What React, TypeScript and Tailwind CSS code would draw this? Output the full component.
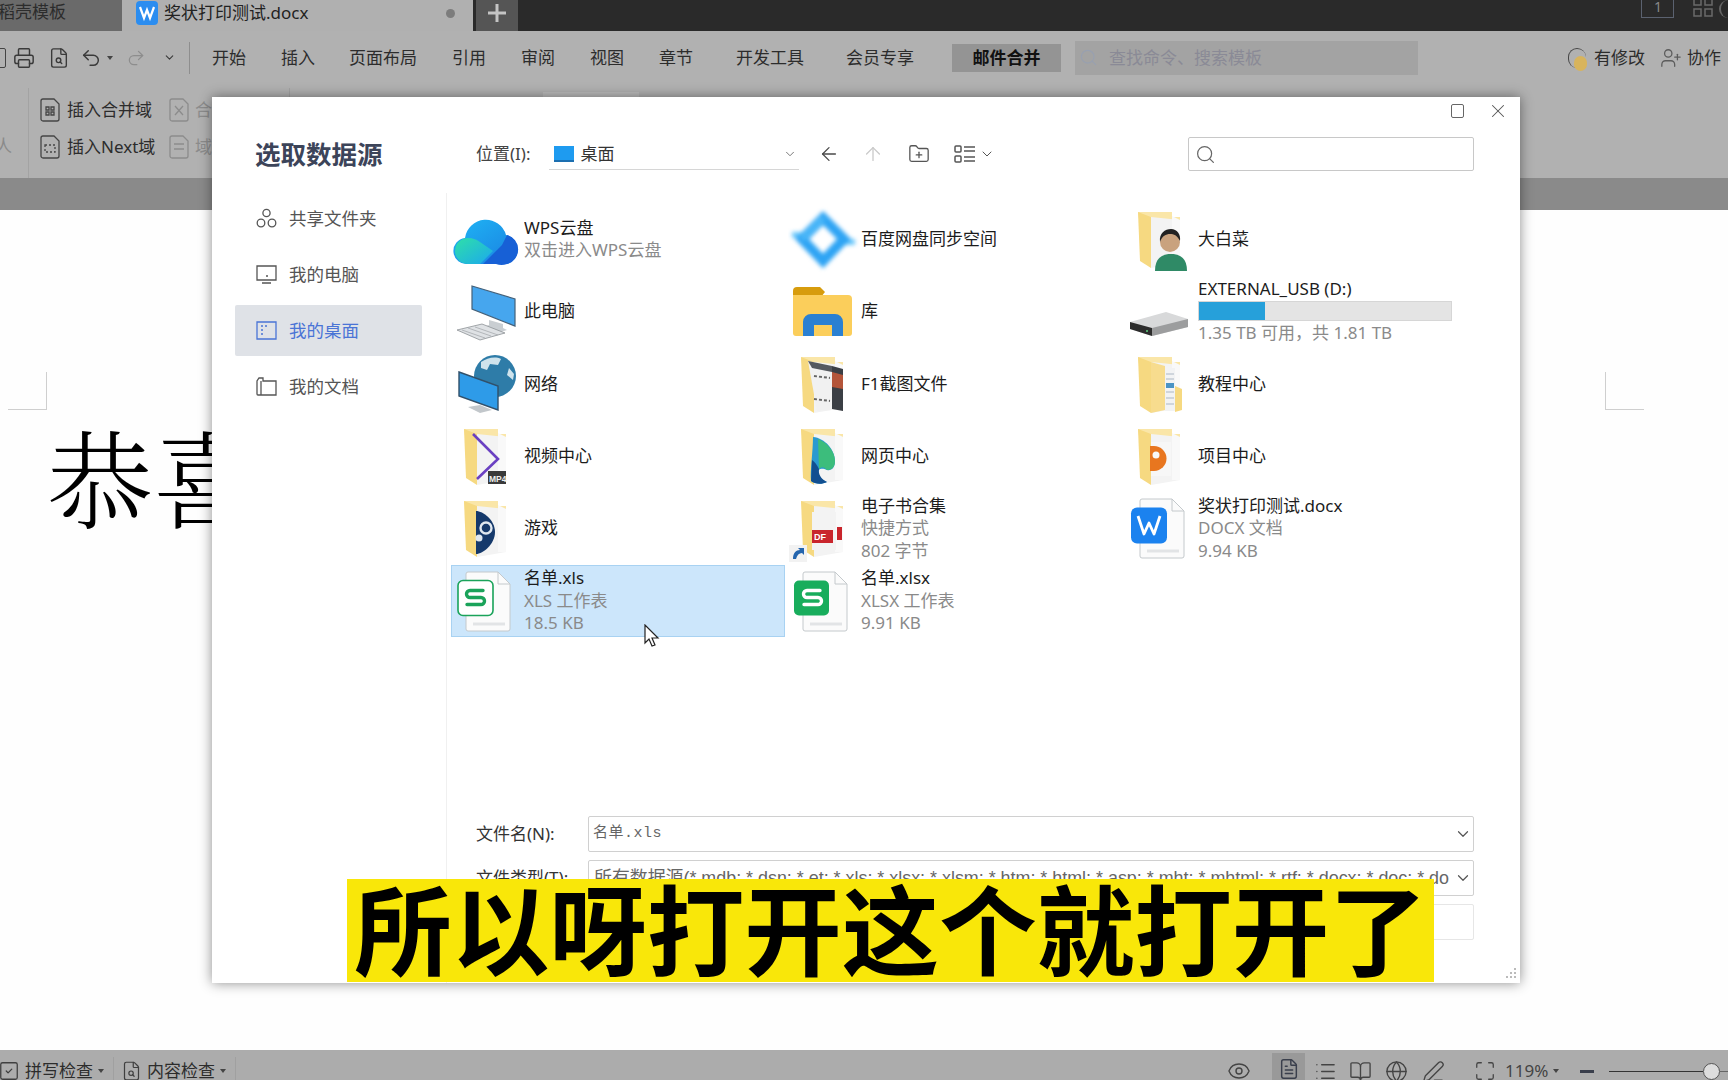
import type { ReactNode } from 'react'
import {
  ArrowLeft,
  ArrowUp,
  BookOpen,
  ChevronDown,
  Eye,
  FileSearch,
  FileText,
  FolderPlus,
  Globe,
  List,
  Maximize,
  PenLine,
  Printer,
  Redo2,
  Search,
  SquareCheck,
  Undo2,
  UserPlus,
  X,
} from 'lucide-react'

const menus = [
  { label: '开始', cls: 'ml-[22px]' },
  { label: '插入', cls: 'ml-[35px]' },
  { label: '页面布局', cls: 'ml-[34px]' },
  { label: '引用', cls: 'ml-[35px]' },
  { label: '审阅', cls: 'ml-[35px]' },
  { label: '视图', cls: 'ml-[35px]' },
  { label: '章节', cls: 'ml-[35px]' },
  { label: '开发工具', cls: 'ml-[43px]' },
  { label: '会员专享', cls: 'ml-[42px]' },
]

function Caret() {
  return <span className="ml-[5px] inline-block border-x-[3px] border-t-[4px] border-x-transparent border-t-[#444]" />
}

function TitleBar() {
  return (
    <div className="flex h-[31px] bg-[#2a2a2a] shrink-0 overflow-hidden text-[17px] leading-[24px]">
      <div className="w-[122px] bg-[#6a6a6a] text-[#2c2c2c] -indent-[2px]">稻壳模板</div>
      <div className="w-[351px] bg-[#b0b0b0] flex items-center pl-[14px] pb-[5px] text-[#222]">
        <svg width="22" height="24" viewBox="0 0 22 24">
          <rect width="22" height="24" rx="4" fill="#2b8df0" />
          <path d="M4 6l4 11 3-8 3 8 4-11" fill="none" stroke="#fff" strokeWidth="2.2" />
        </svg>
        <span className="ml-[6px]">奖状打印测试.docx</span>
        <span className="ml-[138px] w-[9px] h-[9px] rounded-full bg-[#7c7c7c]" />
      </div>
      <div className="ml-[3px] w-[42px] bg-[#555] flex justify-center pb-[6px] items-center text-[#bbb]">
        <svg width="22" height="22" viewBox="0 0 22 22"><path d="M11 2v18M2 11h18" stroke="#c4c4c4" strokeWidth="3" /></svg>
      </div>
      <div className="ml-auto flex items-start text-[#888]">
        <div className="w-[33px] h-[18px] border border-t-0 border-[#5b6270] text-[14px] leading-[14px] pl-[12px]">1</div>
        <svg className="ml-[19px]" width="20" height="18" viewBox="0 0 20 18" fill="none" stroke="#6a6a6a" strokeWidth="1.5">
          <rect x="1" y="-2" width="7" height="7" /><rect x="12" y="-2" width="7" height="7" />
          <rect x="1" y="9" width="7" height="7" /><rect x="12" y="9" width="7" height="7" />
        </svg>
        <div className="ml-[6px] w-[9px] h-[18px] rounded-l-full border-l-2 border-[#666]" />
      </div>
    </div>
  )
}

function MenuRow() {
  return (
    <div className="flex items-center h-[57px] pb-[4px] shrink-0 text-[17px] text-[#2c2c2c] bg-[#b1b1b1]">
      <div className="-ml-[8px] w-[14px] h-[20px] border-[1.5px] border-[#444] rounded-[2px]" />
      <Printer className="ml-[7px] w-[22px] h-[22px] text-[#3a3a3a]" strokeWidth={1.6} />
      <FileSearch className="ml-[13px] w-[22px] h-[24px] text-[#3a3a3a]" strokeWidth={1.5} />
      <Undo2 className="ml-[10px] w-[22px] h-[22px] text-[#3a3a3a]" strokeWidth={1.6} />
      <Caret />
      <Redo2 className="ml-[13px] w-[20px] h-[20px] text-[#8d8d8d]" strokeWidth={1.5} />
      <ChevronDown className="ml-[17px] w-[13px] h-[13px] text-[#3a3a3a]" />
      <div className="ml-[13px] w-px h-[32px] bg-[#8e8e8e]" />
      {menus.map((m) => (
        <span key={m.label} className={m.cls}>{m.label}</span>
      ))}
      <div className="ml-[38px] w-[109px] h-[28px] bg-[#949494] flex items-center justify-center font-bold text-[#111]">邮件合并</div>
      <div className="ml-[14px] w-[343px] h-[34px] bg-[#a3a3a3] flex items-center text-[#8a8a96]">
        <Search className="ml-[4px] w-[19px] h-[19px] text-[#98a0b0]" strokeWidth={1.5} />
        <span className="ml-[11px]">查找命令、搜索模板</span>
      </div>
      <div className="ml-[150px] w-[18px] h-[20px] rounded-full border-l border-t border-[#444] relative">
        <span className="absolute left-[5px] top-[7px] w-[13px] h-[15px] rounded-full bg-[#d8b45c]" />
      </div>
      <span className="ml-[8px]">有修改</span>
      <UserPlus className="ml-[15px] w-[22px] h-[22px] text-[#5c5c5c]" strokeWidth={1.4} />
      <span className="ml-[5px]">协作</span>
    </div>
  )
}

function SmallDoc({ inner, muted }: { inner: ReactNode; muted?: boolean }) {
  return (
    <svg width="20" height="24" viewBox="0 0 20 24" fill="none" stroke={muted ? '#8c8c8c' : '#454545'} strokeWidth="1.3">
      <path d="M3 1h11l5 5v15a2 2 0 0 1-2 2H3a2 2 0 0 1-2-2V3a2 2 0 0 1 2-2z" />
      {inner}
    </svg>
  )
}

function RibbonRow() {
  return (
    <div className="flex h-[90px] shrink-0 bg-[#b1b1b1] text-[17px] text-[#2c2c2c]">
      <div className="w-[29px] border-r border-[#a3a3a3] text-[#8a8a8a] pt-[45px] -indent-[5px]">人</div>
      <div className="flex flex-col gap-[11px] pl-[11px] pt-[9px] w-[130px]">
        <div className="flex items-center h-[26px]">
          <SmallDoc inner={<path d="M6 9h3v3H6zM11 9h3v3h-3zM6 14h3v3H6zM11 14h3v3h-3z" />} />
          <span className="ml-[7px]">插入合并域</span>
        </div>
        <div className="flex items-center h-[26px]">
          <SmallDoc inner={<path d="M5 10h10v7H5z" strokeDasharray="2 2" />} />
          <span className="ml-[7px]">插入Next域</span>
        </div>
      </div>
      <div className="flex flex-col gap-[11px] pl-[10px] pt-[9px] w-[130px] text-[#8c8c8c]">
        <div className="flex items-center h-[26px]">
          <SmallDoc muted inner={<path d="M6 8l8 9M14 8l-8 9" />} />
          <span className="ml-[6px]">合</span>
        </div>
        <div className="flex items-center h-[26px]">
          <SmallDoc muted inner={<path d="M5 9h10M5 14h10" />} />
          <span className="ml-[6px]">域</span>
        </div>
      </div>
      <div className="w-px h-[9px] bg-[#a3a3a3]" />
      <div className="ml-[253px] mt-[4px] w-[96px] h-[5px] bg-[#bcbcbc]" />
    </div>
  )
}

function Document() {
  return (
    <div className="flex-1 bg-[#fefefe] relative overflow-hidden">
      <div className="absolute left-[8px] top-[162px] w-[39px] h-[38px] border-r border-b border-[#cfcfcf]" />
      <div className="absolute left-[1605px] top-[162px] w-[39px] h-[38px] border-l border-b border-[#cfcfcf]" />
      <div className="pl-[47px] pt-[204px] text-[106px] leading-[120px] text-black font-['Noto_Serif_CJK_SC','Liberation_Serif','Noto_Sans_CJK_SC',serif] font-light">恭喜</div>
    </div>
  )
}

function StatusBar() {
  return (
    <div className="h-[30px] shrink-0 bg-[#acacac] flex items-center pt-[12px] text-[17px] text-[#2c2c2c]">
      <SquareCheck className="-ml-[2px] w-[22px] h-[22px] text-[#3f3f3f]" strokeWidth={1.4} />
      <span className="ml-[5px]">拼写检查</span>
      <Caret />
      <div className="ml-[9px] w-px h-[28px] bg-[#a0a0a0]" />
      <FileSearch className="ml-[7px] w-[21px] h-[24px] text-[#3f3f3f]" strokeWidth={1.4} />
      <span className="ml-[5px]">内容检查</span>
      <Caret />
      <div className="ml-[9px] w-px h-[28px] bg-[#a0a0a0]" />
      <Eye className="ml-[991px] w-[24px] h-[24px] text-[#444]" strokeWidth={1.4} />
      <div className="ml-[21px] w-[33px] h-[30px] -mt-[6px] pt-[4px] bg-[#999] flex justify-center">
        <FileText className="w-[22px] h-[24px] text-[#3a3f4c]" strokeWidth={1.6} />
      </div>
      <List className="ml-[9px] w-[23px] h-[23px] text-[#444]" strokeWidth={1.4} />
      <BookOpen className="ml-[12px] w-[23px] h-[23px] text-[#444]" strokeWidth={1.4} />
      <Globe className="ml-[13px] w-[23px] h-[23px] text-[#444]" strokeWidth={1.4} />
      <PenLine className="ml-[14px] w-[23px] h-[23px] text-[#444]" strokeWidth={1.4} />
      <Maximize className="ml-[29px] w-[22px] h-[22px] text-[#444]" strokeWidth={1.4} />
      <span className="ml-[9px] text-[#444]">119%</span>
      <Caret />
      <div className="ml-[21px] w-[14px] h-[3px] bg-[#3a3f4c]" />
      <div className="ml-[15px] w-[94px] h-px bg-[#333]" />
      <div className="w-[17px] h-[17px] rounded-full bg-[#ddd] border border-[#555]" />
      <div className="flex-1 h-px bg-[#666]" />
    </div>
  )
}

/* ---------- file icons ---------- */

function Ico({ children }: { children: ReactNode }) {
  return <svg className="shrink-0" width="72" height="72" viewBox="0 0 72 72">{children}</svg>
}

function Folder({ children }: { children?: ReactNode }) {
  return (
    <Ico>
      <path d="M13 9h34v5h8v46H20z" fill="#fae6a8" />
      <path d="M26 14l29 3v43l-29 5z" fill="#f3f3f3" />
      <path d="M47 13l8 4v43h-8z" fill="#f9f9f9" />
      <path d="M13 9l13 5v51l-11-7z" fill="#f6d981" />
      {children}
    </Ico>
  )
}

function FilePage({ children }: { children: ReactNode }) {
  return (
    <Ico>
      <path d="M17 7h30l12 12v45a2 2 0 0 1-2 2H17a2 2 0 0 1-2-2V9a2 2 0 0 1 2-2z" fill="#fbfbfb" stroke="#c4c9cc" strokeWidth="1" />
      <path d="M47 7v12h12" fill="none" stroke="#c4c9cc" />
      <path d="M22 59h32" stroke="#e2e4e6" strokeWidth="3" />
      {children}
    </Ico>
  )
}

function SheetIcon({ outlined }: { outlined?: boolean }) {
  const color = outlined ? '#1aa35a' : '#fff'
  return (
    <FilePage>
      <rect x={outlined ? 7 : 6} y="15.5" width="35" height="35" rx="5" fill={outlined ? '#fff' : '#18ad5c'} stroke="#1aa35a" strokeWidth={outlined ? 1.6 : 0} />
      <path d="M32 25.5H19a3.5 3.5 0 0 0 0 7h11a3.5 3.5 0 0 1 0 7H16" fill="none" stroke={color} strokeWidth="3.4" strokeLinecap="round" />
    </FilePage>
  )
}

const WpsCloud = () => (
  <Ico>
    <defs>
      <linearGradient id="c1" x1="0" y1="0" x2="1" y2="1"><stop offset="0" stopColor="#1fb6f5" /><stop offset="1" stopColor="#1a7fe0" /></linearGradient>
      <linearGradient id="c2" x1="0" y1="0" x2="1" y2="1"><stop offset="0" stopColor="#2ee0a8" /><stop offset="1" stopColor="#1ca8ee" /></linearGradient>
    </defs>
    <g transform="translate(2 0)">
      <path d="M15 61a13 13 0 0 1-3-26 21 21 0 0 1 41-3 15 15 0 0 1 1 29z" fill="url(#c1)" />
      <path d="M43 61a15 15 0 0 0 11 0 15 15 0 0 0 0-29l-5 10 0 0-19 19z" fill="#1760d6" />
      <path d="M15 61a13 13 0 0 1 0-26c5 0 9 2 12 4l13 9-13 13z" fill="url(#c2)" />
    </g>
  </Ico>
)

const Baidu = () => (
  <Ico>
    <g className="blur-[2px]" fill="none">
      <path d="M4 32h16M51 39h16" stroke="#6cc8fb" strokeWidth="6" />
      <path d="M35 15l21 21-21 22-21-22z" stroke="#2ea4f4" strokeWidth="10" />
      <path d="M35 15l-21 21" stroke="#49b6f8" strokeWidth="7" />
    </g>
  </Ico>
)

const Computer = () => (
  <Ico>
    <path d="M21 11l43 13v27L21 34z" fill="#46a6ee" stroke="#44617a" strokeWidth="1.2" />
    <path d="M38 45l14 4v4l4 2-6 2-18-5 6-2z" fill="#c9ced2" />
    <path d="M6 55l25-6 23 9-25 7z" fill="#dfe2e5" stroke="#8d9296" strokeWidth=".8" />
    <path d="M11 55l23 8M17 53l23 8M24 52l23 8" stroke="#a7abaf" strokeWidth=".8" />
  </Ico>
)

const Network = () => (
  <Ico>
    <circle cx="44" cy="28" r="21" fill="#2e7ca8" />
    <path d="M30 14c6-4 14-6 20-3l-3 6-8-1-3 6-6-2zM58 20l5 6-1 6-6-5z" fill="#cfe3ec" />
    <path d="M8 24l39 14v24L8 48z" fill="#2e9be8" stroke="#31506a" strokeWidth="1.4" />
    <path d="M17 59l12-2 12 5-12 3z" fill="#c2c7cb" />
  </Ico>
)

const Library = () => (
  <Ico>
    <path d="M5 16a4 4 0 0 1 4-4h23l5 5-4 5H5z" fill="#d79c0d" />
    <path d="M5 20h55a4 4 0 0 1 4 4v34a3 3 0 0 1-3 3H8a3 3 0 0 1-3-3z" fill="#fbce5b" />
    <path d="M15 61V47a8 8 0 0 1 8-8h24a8 8 0 0 1 8 8v14H44V50H26v11z" fill="#2a80d2" />
  </Ico>
)

const Drive = () => (
  <Ico>
    <path d="M5 47l36-10 22 7v8L27 61 5 54z" fill="#d8d9da" />
    <path d="M5 47l22 6v8L5 54z" fill="#2c2c2c" />
    <path d="M27 53l36-9v8L27 61z" fill="#9c9d9e" />
    <circle cx="22" cy="56" r="1" fill="#5fd07f" />
  </Ico>
)

const Person = () => (
  <Folder>
    <path d="M30 68c0-12 6-17 16-17s16 5 16 17z" fill="#2f8a66" />
    <circle cx="45" cy="39" r="10" fill="#c9a27e" />
    <path d="M35 39c-1-9 5-13 11-13s10 5 9 12c-3-6-6-7-10-7s-8 2-10 8z" fill="#222" />
  </Folder>
)

const fileRows: { icon: ReactNode; name: string; lines?: string[]; bar?: boolean; active?: boolean }[] = [
  { icon: <WpsCloud />, name: 'WPS云盘', lines: ['双击进入WPS云盘'] },
  { icon: <Baidu />, name: '百度网盘同步空间' },
  { icon: <Person />, name: '大白菜' },
  { icon: <Computer />, name: '此电脑' },
  { icon: <Library />, name: '库' },
  { icon: <Drive />, name: 'EXTERNAL_USB (D:)', lines: ['1.35 TB 可用，共 1.81 TB'], bar: true },
  { icon: <Network />, name: '网络' },
  {
    icon: (
      <Folder>
        <path d="M20 13l24 5v44l-15 1z" fill="#f1f1f1" />
        <path d="M20 13l24 5v6l-20-4z" fill="#55595f" />
        <path d="M44 18l11 3v42l-11-2z" fill="#3b3f45" />
        <path d="M44 24l11 3v14l-11-2z" fill="#b4553a" />
        <path d="M26 28l16 2M26 51l16 2" stroke="#666" strokeWidth="2" strokeDasharray="3 2" />
      </Folder>
    ),
    name: 'F1截图文件',
  },
  {
    icon: (
      <Folder>
        <path d="M26 14l14 4v44l-14 3z" fill="#f7dc8e" />
        <rect x="40" y="20" width="10" height="43" fill="#f2f3f4" />
        <path d="M41 26h8M41 31h8M41 44h8M41 50h8M41 56h8" stroke="#c3ccd4" strokeWidth="1.5" />
        <rect x="41" y="35" width="8" height="5" fill="#4a93c4" />
        <path d="M50 38l7 3v21l-7 2z" fill="#f6d981" />
      </Folder>
    ),
    name: '教程中心',
  },
  {
    icon: (
      <Folder>
        <path d="M22 14l25 25-21 20" fill="none" stroke="#6a40c2" strokeWidth="2.6" />
        <rect x="37" y="51" width="18" height="13" fill="#3a3a3a" />
        <text x="38" y="61.5" fontSize="8.5" fontWeight="700" fill="#eee" fontFamily="Liberation Sans, sans-serif">MP4</text>
      </Folder>
    ),
    name: '视频中心',
  },
  {
    icon: (
      <Folder>
        <path d="M25 17c12 1 22 13 22 24 0 7-4 10-8 9-3-1-6-2-8 0-2 4 2 10 8 12-6 3-12 2-16-1-1-10 2-30 2-44z" fill="#2a9ad0" />
        <path d="M30 19c10 4 17 13 17 22 0 6-3 9-8 9-3-3-5-4-8-1z" fill="#3cbd7c" />
        <path d="M24 40c3 2 5 5 7 9-1 5 2 10 8 13-6 3-12 2-16-1z" fill="#124f90" />
      </Folder>
    ),
    name: '网页中心',
  },
  {
    icon: (
      <Folder>
        <rect x="26" y="22" width="20" height="34" fill="#f7f7f7" />
        <path d="M25 26h4a12 12 0 0 1 0 25h-4z" fill="#e8761f" />
        <circle cx="31" cy="35" r="3.5" fill="#f8f8f8" />
      </Folder>
    ),
    name: '项目中心',
  },
  {
    icon: (
      <Folder>
        <path d="M25 19c7 0 19 9 19 21s-12 22-19 22z" fill="#15396b" />
        <circle cx="35" cy="36" r="5.5" fill="none" stroke="#dfe7ef" strokeWidth="2.4" />
        <circle cx="28" cy="46" r="3.5" fill="#dfe7ef" />
      </Folder>
    ),
    name: '游戏',
  },
  {
    icon: (
      <Folder>
        <rect x="24" y="20" width="24" height="38" fill="#f3f3f3" />
        <rect x="24" y="38" width="21" height="13" fill="#c9252c" />
        <text x="26" y="48" fontSize="9" fontWeight="700" fill="#fff" fontFamily="Liberation Sans, sans-serif">DF</text>
        <rect x="49" y="35" width="5" height="13" fill="#c9252c" />
        <rect x="1" y="53" width="18" height="17" fill="#f2f2f2" />
        <path d="M5 67c0-6 3-9 7-9l-2-2h6v7l-2-2c-3 0-5 2-6 6z" fill="#2465ae" />
      </Folder>
    ),
    name: '电子书合集',
    lines: ['快捷方式', '802 字节'],
  },
  {
    icon: (
      <FilePage>
        <rect x="6" y="15.5" width="36" height="36" rx="6" fill="#1b82ef" />
        <path d="M13 24l6 18 5-11 5 11 6-18" fill="none" stroke="#fff" strokeWidth="2.8" strokeLinejoin="round" />
      </FilePage>
    ),
    name: '奖状打印测试.docx',
    lines: ['DOCX 文档', '9.94 KB'],
  },
  { icon: <SheetIcon outlined />, name: '名单.xls', lines: ['XLS 工作表', '18.5 KB'], active: true },
  { icon: <SheetIcon />, name: '名单.xlsx', lines: ['XLSX 工作表', '9.91 KB'] },
]

function FileItem({ item }: { item: (typeof fileRows)[number] }) {
  return (
    <div className={`flex items-center h-[72.33px] w-[334px] ${item.active ? 'bg-[#cce6fb] outline outline-1 -outline-offset-1 outline-[#a8d2f2]' : ''}`}>
      {item.icon}
      <div className="ml-[1px] flex-1 text-[17px] leading-[22.5px] text-[#1c1c1c]">
        <div className="truncate">{item.name}</div>
        {item.bar && (
          <div className="w-[254px] h-[20px] my-[1px] bg-[#e4e4e4] border border-[#d6d6d6]">
            <div className="w-[66px] h-full bg-[#26a0da]" />
          </div>
        )}
        {item.lines?.map((l) => (
          <div key={l} className="text-[#8a8a8a]">{l}</div>
        ))}
      </div>
    </div>
  )
}

/* ---------- dialog ---------- */

const navItems = [
  {
    label: '共享文件夹',
    icon: (
      <svg width="21" height="21" viewBox="0 0 21 21" fill="none" stroke="currentColor" strokeWidth="1.3">
        <circle cx="10.5" cy="5" r="3.6" /><circle cx="5" cy="15" r="3.8" /><circle cx="16" cy="15" r="3.8" />
      </svg>
    ),
  },
  {
    label: '我的电脑',
    icon: (
      <svg width="21" height="21" viewBox="0 0 21 21" fill="none" stroke="currentColor" strokeWidth="1.3">
        <path d="M1 2h19v14H1zM6 19h9" /><path d="M10 12h2" />
      </svg>
    ),
  },
  {
    label: '我的桌面',
    active: true,
    icon: (
      <svg width="21" height="21" viewBox="0 0 21 21" fill="none" stroke="currentColor" strokeWidth="1.3">
        <path d="M1 2h19v17H1z" /><path d="M5 6h2M9 6h2M5 10h2M9 10h0M5 14h2" />
      </svg>
    ),
  },
  {
    label: '我的文档',
    icon: (
      <svg width="21" height="21" viewBox="0 0 21 21" fill="none" stroke="currentColor" strokeWidth="1.3">
        <path d="M1 5v13a1 1 0 0 0 1 1h18V5H7V2H3z" /><path d="M5 19V5" />
      </svg>
    ),
  },
]

function Field({ label, children, cls }: { label?: string; children?: ReactNode; cls?: string }) {
  return (
    <div className="flex items-center h-[36px]">
      <div className="w-[112px] text-[17px] text-[#333] truncate">{label}</div>
      <div className={`flex-1 h-full min-w-0 flex items-center rounded-[2px] border ${cls ?? 'border-[#d0d0d0]'}`}>{children}</div>
    </div>
  )
}

function Dialog() {
  return (
    <div className="absolute left-[212px] top-[97px] w-[1308px] h-[886px] bg-white shadow-[0_0_12px_rgba(0,0,0,0.45)] flex flex-col">
      <div className="flex justify-end items-center h-[27px] pr-[11px] text-[#555] shrink-0">
        <div className="w-[13px] h-[14px] border-[1.5px] border-[#666] rounded-[2px]" />
        <X className="ml-[23px] w-[22px] h-[22px]" strokeWidth={1.1} />
      </div>
      <div className="flex items-center h-[46px] mt-[7px] shrink-0 pr-[46px]">
        <div className="w-[264px] pl-[43px] text-[25.5px] font-bold text-[#3c4459] pt-[1px]">选取数据源</div>
        <span className="text-[17px] text-[#444]">位置(I):</span>
        <div className="ml-[18px] w-[250px] h-[32px] flex items-center border-b border-[#d6d6d6]">
          <div className="ml-[5px] w-[20px] h-[16px] bg-[#1e9bf0] border-b-2 border-[#1c6fb0]" />
          <span className="ml-[7px] text-[17px] text-[#333]">桌面</span>
          <ChevronDown className="ml-auto mr-[2px] w-[14px] h-[14px] text-[#666]" strokeWidth={1.5} />
        </div>
        <ArrowLeft className="ml-[19px] w-[22px] h-[22px] text-[#4a4a4a]" strokeWidth={1.4} />
        <ArrowUp className="ml-[22px] w-[22px] h-[22px] text-[#c9c9c9]" strokeWidth={1.4} />
        <FolderPlus className="ml-[24px] w-[22px] h-[22px] text-[#555]" strokeWidth={1.4} />
        <svg className="ml-[24px]" width="22" height="18" viewBox="0 0 22 18" fill="none" stroke="#555" strokeWidth="1.5">
          <rect x="1" y="1" width="6" height="6" rx="1" /><rect x="1" y="11" width="6" height="6" rx="1" />
          <path d="M10 2h11M10 6h11M10 12h11M10 16h11" />
        </svg>
        <ChevronDown className="ml-[3px] w-[16px] h-[16px] text-[#555]" strokeWidth={1.5} />
        <div className="ml-auto w-[286px] h-[34px] rounded-[2px] border border-[#c8c8c8] flex items-center pl-[6px]">
          <Search className="w-[21px] h-[21px] text-[#666]" strokeWidth={1.4} />
        </div>
      </div>
      <div className="flex flex-1 mt-[18px] min-h-0">
        <div className="w-[235px] shrink-0 border-r border-[#f0f0f0] pl-[23px] pr-[24px] flex flex-col gap-[5px] -mt-[2px]">
          {navItems.map((n) => (
            <div
              key={n.label}
              className={`h-[51px] flex items-center pl-[21px] rounded-[2px] text-[17.5px] ${n.active ? 'bg-[#dfe2e7] text-[#4a74d6]' : 'text-[#555]'}`}
            >
              {n.icon}
              <span className="ml-[12px]">{n.label}</span>
            </div>
          ))}
        </div>
        <div className="flex-1 min-w-0 flex flex-col pl-[4px]">
          <div className="grid grid-cols-[337px_337px_337px] pt-[8px]">
            {fileRows.map((f) => (
              <FileItem key={f.name} item={f} />
            ))}
          </div>
          <div className="mt-auto pl-[25px] pr-[46px] pb-[43px] flex flex-col gap-[8px]">
            <Field label="文件名(N):">
              <span className="pl-[4px] text-[15px] tracking-[0.5px] text-[#666] font-['Liberation_Mono','Noto_Sans_CJK_SC',monospace]">名单.xls</span>
              <ChevronDown className="ml-auto mr-[1px] w-[18px] h-[18px] text-[#555]" strokeWidth={1.6} />
            </Field>
            <Field label="文件类型(T):">
              <span className="pl-[5px] flex-1 text-[17.9px] whitespace-nowrap overflow-hidden text-[#666] font-['Liberation_Sans','Noto_Sans_CJK_SC',sans-serif]">
                所有数据源(*.mdb; *.dsn; *.et; *.xls; *.xlsx; *.xlsm; *.htm; *.html; *.asp; *.mht; *.mhtml; *.rtf; *.docx; *.doc; *.do
              </span>
              <ChevronDown className="ml-auto mr-[1px] shrink-0 w-[18px] h-[18px] text-[#555]" strokeWidth={1.6} />
            </Field>
            <Field cls="border-[#e6e6e6]" />
          </div>
        </div>
      </div>
      <svg className="absolute right-[3px] bottom-[3px]" width="12" height="12" viewBox="0 0 12 12" fill="#bbb">
        <rect x="9" y="0" width="2" height="2" /><rect x="5" y="4" width="2" height="2" /><rect x="9" y="4" width="2" height="2" />
        <rect x="1" y="8" width="2" height="2" /><rect x="5" y="8" width="2" height="2" /><rect x="9" y="8" width="2" height="2" />
      </svg>
    </div>
  )
}

export default function App() {
  return (
    <div className="relative w-[1728px] h-[1080px] overflow-hidden flex flex-col font-['Noto_Sans','Noto_Sans_CJK_SC',sans-serif]">
      <TitleBar />
      <MenuRow />
      <RibbonRow />
      <div className="h-[32px] shrink-0 bg-[#8a8a8a]" />
      <Document />
      <StatusBar />
      <Dialog />
      {/* 鼠标指针 */}
      <svg className="absolute left-[643px] top-[624px]" width="18" height="24" viewBox="0 0 18 24">
        <path d="M2 1v18l4-4 3 7 3-1-3-7h6z" fill="#fff" stroke="#222" strokeWidth="1.2" />
      </svg>
      {/* 字幕 */}
      <div className="absolute left-[347px] top-[879px] w-[1087px] h-[103px] bg-[#f9e709] text-[97.5px] leading-[93px] font-bold text-black text-center whitespace-nowrap font-['Noto_Sans_CJK_SC',sans-serif]">
        所以呀打开这个就打开了
      </div>
    </div>
  )
}
